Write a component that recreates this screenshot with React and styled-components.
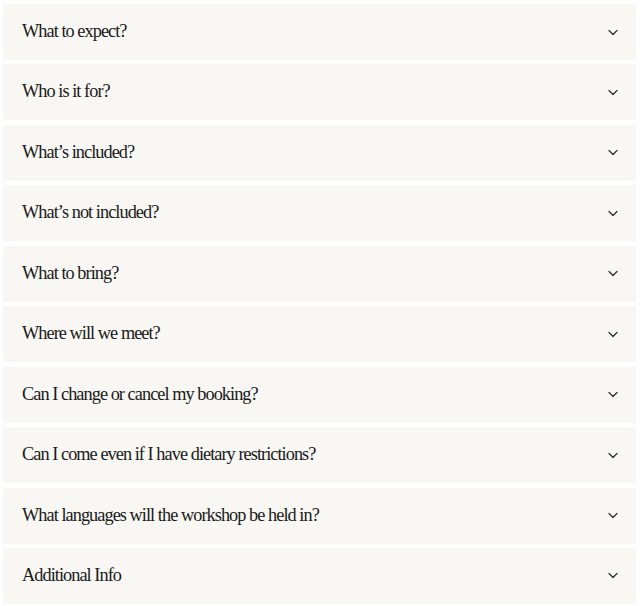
import React from "react";
import styled, { createGlobalStyle } from "styled-components";

const Global = createGlobalStyle`
  html, body { margin: 0; padding: 0; background: #ffffff; }
  * { box-sizing: border-box; }
`;

const List = styled.div`
  display: flex;
  flex-direction: column;
  gap: 4.44px;
  padding: 4px 4px 2px 3px;
  width: 640px;
`;

const Item = styled.button`
  all: unset;
  box-sizing: border-box;
  display: flex;
  align-items: center;
  justify-content: space-between;
  height: 56px;
  padding: 0 18px 0 19px;
  background: #f8f7f3;
  cursor: pointer;
`;

const Question = styled.span`
  font-family: "Liberation Serif", "Times New Roman", serif;
  font-size: 18.3px;
  letter-spacing: -0.95px;
  color: #1a1a1a;
  padding-bottom: 1px;
`;

const Chevron = styled.svg`
  width: 10px;
  height: 7px;
  flex: none;
`;

const questions = [
  "What to expect?",
  "Who is it for?",
  "What\u2019s included?",
  "What\u2019s not included?",
  "What to bring?",
  "Where will we meet?",
  "Can I change or cancel my booking?",
  "Can I come even if I have dietary restrictions?",
  "What languages will the workshop be held in?",
  "Additional Info",
];

export default function App() {
  return (
    <>
      <Global />
      <List>
        {questions.map((q) => (
          <Item key={q}>
            <Question>{q}</Question>
            <Chevron viewBox="0 0 10 7" fill="none">
              <path d="M1 1.5 L5 5.5 L9 1.5" stroke="#2a2a2a" strokeWidth="1.2" strokeLinecap="round" strokeLinejoin="round" />
            </Chevron>
          </Item>
        ))}
      </List>
    </>
  );
}
